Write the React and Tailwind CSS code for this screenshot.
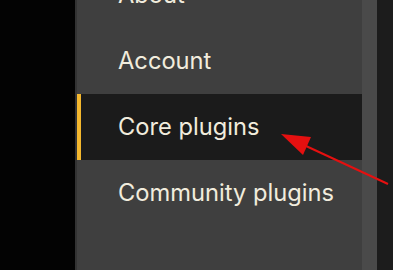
import React from 'react';

const items = [
  { label: 'About' },
  { label: 'Account' },
  { label: 'Core plugins', active: true },
  { label: 'Community plugins' },
  { label: '' },
];

const Arrow = () => (
  <svg className="absolute left-0 top-0 pointer-events-none" width="393" height="270" viewBox="0 0 393 270">
    <line x1="306" y1="146" x2="388" y2="184" stroke="#e51010" strokeWidth="2" />
    <polygon points="281,134 311,137 303,155" fill="#e51010" />
  </svg>
);

export default function App() {
  return (
    <div
      className="relative flex h-[270px] w-[393px] overflow-hidden bg-[#030303]"
      style={{ fontFamily: 'Inter, "Noto Sans", sans-serif' }}
    >
      <div className="w-[75px] shrink-0" />
      <div className="flex w-[287px] shrink-0 flex-col border-l-2 border-[#333333] bg-[#3f3f3f] -mt-[38px]">
        {items.map((item, i) => (
          <div
            key={i}
            className={
              item.active
                ? 'flex h-[66px] shrink-0 items-center border-l-4 border-[#f5b82e] bg-[#1b1b1b] pl-[37px] text-[23.7px] text-[#f1ecdd]'
                : 'flex h-[66px] shrink-0 items-center pl-[41px] text-[23.7px] text-[#f1ecdd]'
            }
          >
            {item.label}
          </div>
        ))}
      </div>
      <div className="w-[15px] shrink-0 bg-[#4a4a4a]" />
      <div className="flex-1 bg-[#1c1c1c]" />
      <Arrow />
    </div>
  );
}
